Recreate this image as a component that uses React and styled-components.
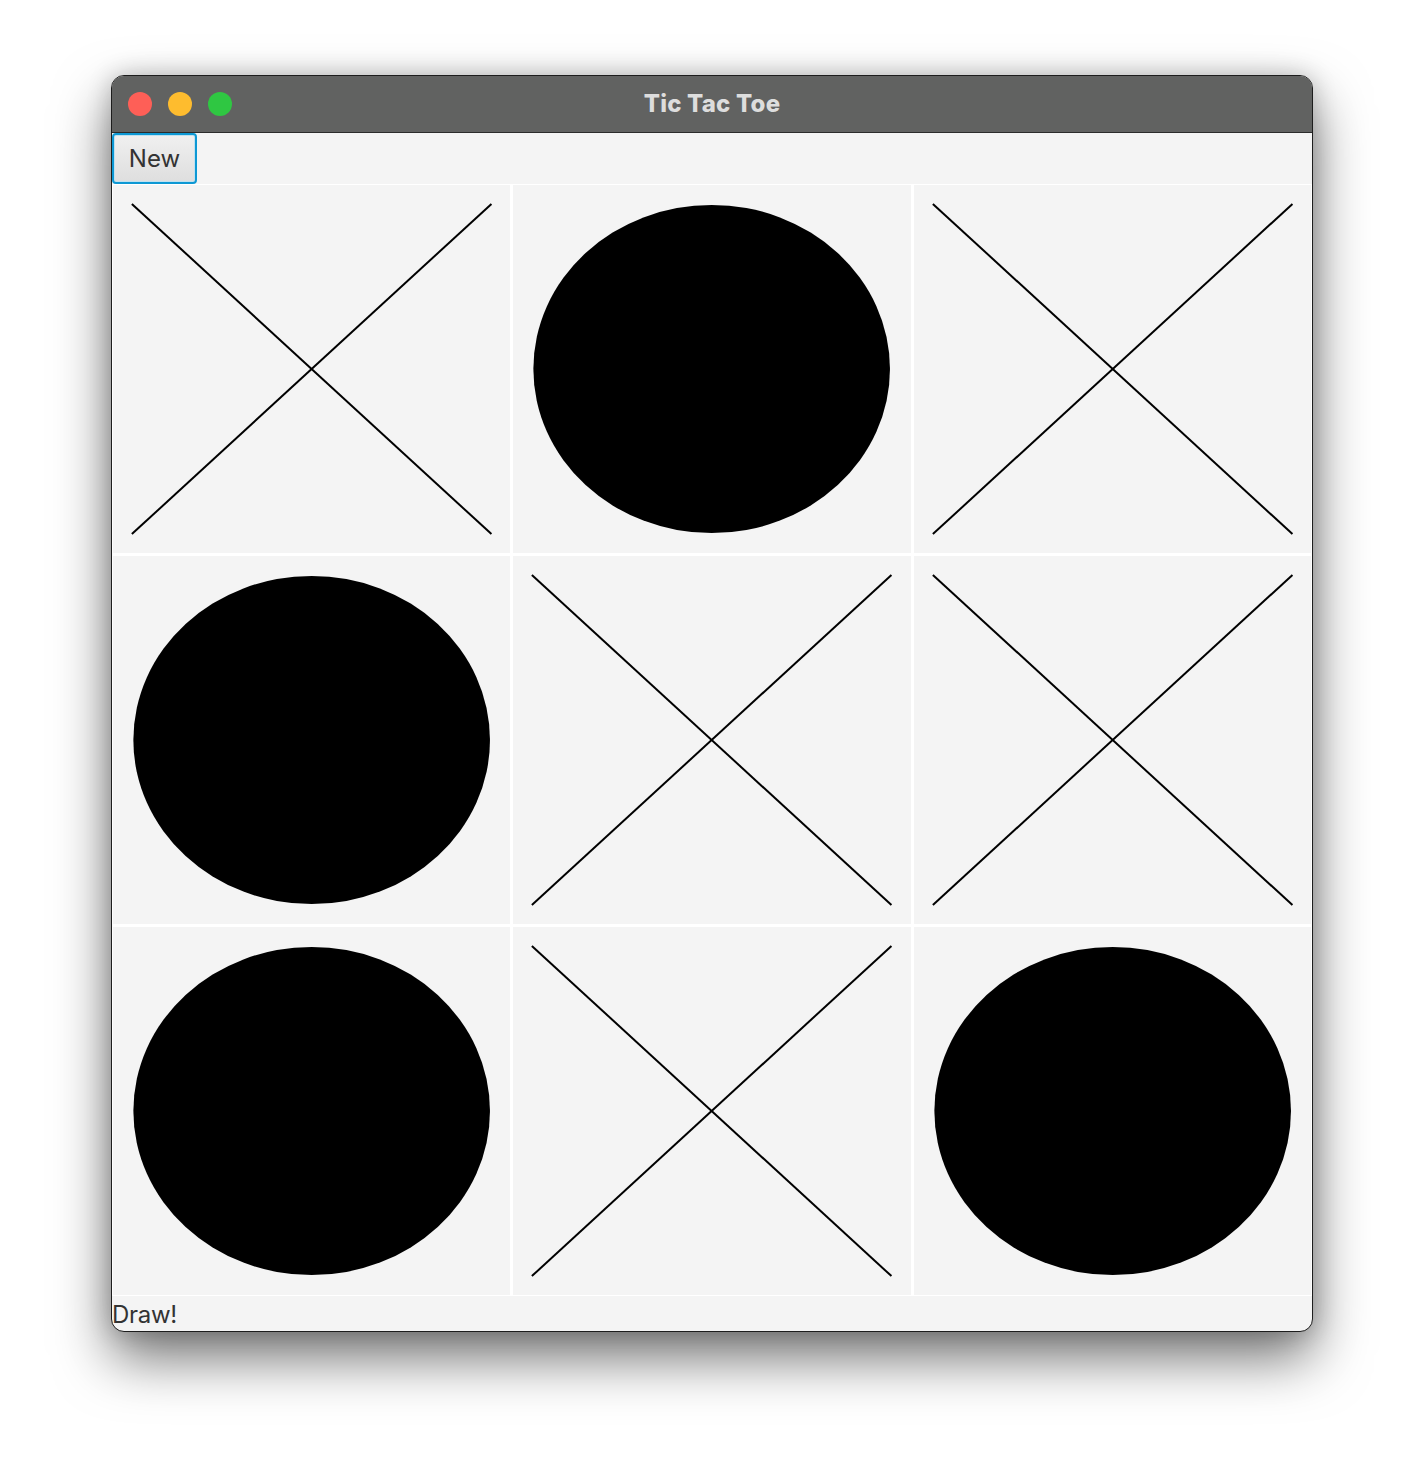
import React from 'react'
import styled, { createGlobalStyle } from 'styled-components'

const board = ['X', 'O', 'X', 'O', 'X', 'X', 'O', 'X', 'O']

const App = () => {
  return (
    <>
      <GlobalStyle />
      <Page>
        <Window>
          <TitleBar>
            <Lights>
              <Light color="#fe5f57" />
              <Light color="#febc2e" />
              <Light color="#2fc742" />
            </Lights>
            <Title>Tic Tac Toe</Title>
            <span />
          </TitleBar>
          <Toolbar>
            <NewButton>New</NewButton>
          </Toolbar>
          <Board>
            {board.map((mark, index) => (
              <Cell key={index}>
                <svg viewBox="0 0 400 370" preserveAspectRatio="none">
                  {mark === 'X' ? (
                    <g stroke="#000" strokeWidth="2">
                      <line x1="19" y1="19" x2="381" y2="351" vectorEffect="non-scaling-stroke" />
                      <line x1="381" y1="19" x2="19" y2="351" vectorEffect="non-scaling-stroke" />
                    </g>
                  ) : (
                    <ellipse cx="200" cy="185" rx="179.5" ry="165" fill="#000" />
                  )}
                </svg>
              </Cell>
            ))}
          </Board>
          <Status>Draw!</Status>
        </Window>
      </Page>
    </>
  )
}

export default App

const GlobalStyle = createGlobalStyle`
html, body {
  margin: 0;
  padding: 0;
  background: #ffffff;
}
* {
  box-sizing: border-box;
}
`

const Page = styled.div`
width: 1424px;
height: 1480px;
padding: 75px 0 0 111px;
`

const Window = styled.div`
width: 1202px;
height: 1257px;
border: 1px solid #1d1d1d;
border-radius: 13px;
overflow: hidden;
background: #f4f4f4;
display: flex;
flex-direction: column;
box-shadow: 0 26px 55px rgba(0, 0, 0, 0.55), 0 0 24px rgba(0, 0, 0, 0.2);
`

const TitleBar = styled.div`
height: 57px;
flex: none;
background: #616261;
border-bottom: 1px solid #2b2b2b;
display: grid;
grid-template-columns: 1fr auto 1fr;
align-items: center;
`

const Lights = styled.div`
display: flex;
gap: 16px;
padding-left: 16px;
`

const Light = styled.div`
width: 24px;
height: 24px;
border-radius: 50%;
background: ${p => p.color};
`

const Title = styled.div`
font-family: Inter, "Liberation Sans", sans-serif;
font-weight: 800;
font-size: 24px;
color: #dddddd;
letter-spacing: 0.2px;
margin-top: -2px;
`

const Toolbar = styled.div`
height: 51px;
flex: none;
display: flex;
align-items: stretch;
`

const NewButton = styled.button`
width: 85px;
height: 51px;
margin: 0;
padding: 0;
border: 2px solid #0d98d4;
border-radius: 4px;
background: linear-gradient(#f0f0f0, #dedede);
box-shadow: inset 0 0 0 1px #bfe1f0;
font-family: Inter, "Liberation Sans", sans-serif;
font-size: 24px;
color: #333333;
`

const Board = styled.div`
height: 1112px;
flex: none;
display: grid;
grid-template-columns: repeat(3, 1fr);
grid-template-rows: repeat(3, 1fr);
gap: 1px;
background: #ffffff;
`

const Cell = styled.div`
background: #f4f4f4;
border: 1px solid #ffffff;
min-width: 0;
min-height: 0;

& > svg {
  display: block;
  width: 100%;
  height: 100%;
}
`

const Status = styled.div`
flex: 1;
display: flex;
align-items: center;
font-family: Inter, "Liberation Sans", sans-serif;
font-size: 24px;
color: #333333;
letter-spacing: -0.3px;
padding-top: 2px;
`
